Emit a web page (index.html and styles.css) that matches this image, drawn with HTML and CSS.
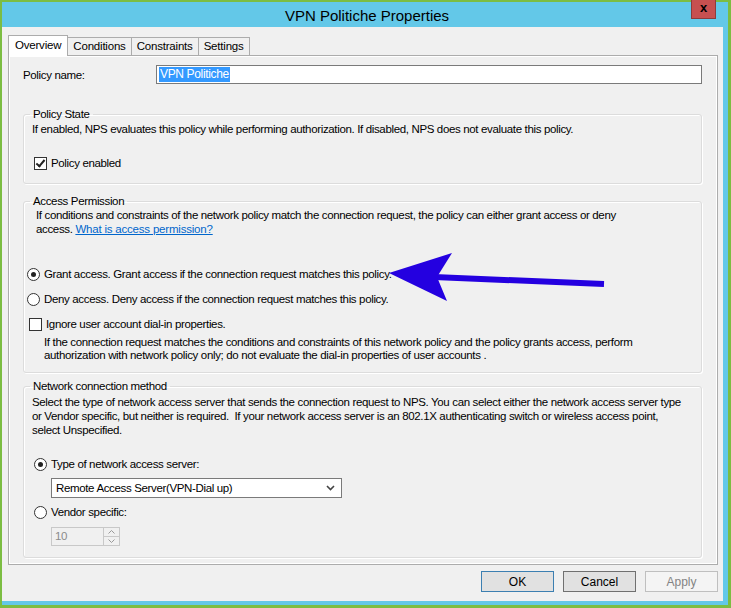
FILE: index.html
```html
<!DOCTYPE html>
<html lang="en">
<head>
    <meta charset="UTF-8">
    <title>VPN Politiche Properties</title>
    <link rel="stylesheet" href="styles.css">
</head>
<body>
    <div class="frame">
        <!-- Title bar -->
        <div class="titlebar">
            <span class="title">VPN Politiche Properties</span>
            <span class="close">x</span>
        </div>

        <div class="dialog">
            <!-- Tabs -->
            <div class="tabs">
                <span class="tab active">Overview</span>
                <span class="tab">Conditions</span>
                <span class="tab">Constraints</span>
                <span class="tab">Settings</span>
            </div>

            <div class="panel">
                <div class="name-row">
                    <span class="name-label">Policy name:</span>
                    <div class="textbox"><span class="selected">VPN Politiche</span></div>
                </div>

                <fieldset class="group state">
                    <legend>Policy State</legend>
                    <p class="line">If enabled, NPS evaluates this policy while performing authorization. If disabled, NPS does not evaluate this policy.</p>
                    <div class="option enabled-row"><span class="check on"></span>Policy enabled</div>
                </fieldset>

                <fieldset class="group permission">
                    <legend>Access Permission</legend>
                    <div class="lines indent">
                        <div>If conditions and constraints of the network policy match the connection request, the policy can either grant access or deny</div>
                        <div>access. <a href="#">What is access permission?</a></div>
                    </div>
                    <div class="option grant"><span class="radio on"></span>Grant access. Grant access if the connection request matches this policy.</div>
                    <div class="option deny"><span class="radio"></span>Deny access. Deny access if the connection request matches this policy.</div>
                    <div class="option ignore"><span class="check"></span>Ignore user account dial-in properties.</div>
                    <p class="lines small">If the connection request matches the conditions and constraints of this network policy and the policy grants access, perform authorization with network policy only; do not evaluate the dial-in properties of user accounts .</p>
                </fieldset>

                <fieldset class="group method">
                    <legend>Network connection method</legend>
                    <p class="lines">Select the type of network access server that sends the connection request to NPS. You can select either the network access server type or Vendor specific, but neither is required.&nbsp; If your network access server is an 802.1X authenticating switch or wireless access point, select Unspecified.</p>
                    <div class="option type-row"><span class="radio on"></span>Type of network access server:</div>
                    <div class="combo">
                        <span>Remote Access Server(VPN-Dial up)</span>
                        <svg width="9" height="6" viewBox="0 0 9 6"><path d="M1 1 L4.5 4.5 L8 1" fill="none" stroke="#444" stroke-width="1.6"/></svg>
                    </div>
                    <div class="option vendor-row"><span class="radio"></span>Vendor specific:</div>
                    <div class="spin">
                        <span class="spin-value">10</span>
                        <span class="spin-btns">
                            <span class="spin-btn"><svg width="7" height="4" viewBox="0 0 7 4"><path d="M0.5 3.5 L3.5 0.5 L6.5 3.5" fill="none" stroke="#999" stroke-width="1"/></svg></span>
                            <span class="spin-btn"><svg width="7" height="4" viewBox="0 0 7 4"><path d="M0.5 0.5 L3.5 3.5 L6.5 0.5" fill="none" stroke="#999" stroke-width="1"/></svg></span>
                        </span>
                    </div>
                </fieldset>
            </div>

            <!-- Dialog buttons -->
            <div class="buttons">
                <button class="btn default">OK</button>
                <button class="btn">Cancel</button>
                <button class="btn disabled">Apply</button>
            </div>
        </div>

        <!-- Annotation arrow -->
        <svg class="arrow" width="731" height="608" viewBox="0 0 731 608">
            <line x1="434" y1="277" x2="604" y2="284" stroke="#2400e0" stroke-width="6"/>
            <polygon points="389,273 452,253 437,277 447,301" fill="#2400e0"/>
        </svg>
    </div>
</body>
</html>
```

FILE: styles.css
```css
body {
    margin: 0;
    font-family: "Liberation Sans", Arial, sans-serif;
    font-size: 11.5px;
    color: #000;
}

.frame {
    position: relative;
    width: 731px;
    height: 608px;
    box-sizing: border-box;
    border: 2px solid #7cbd42;
    border-right-width: 3px;
    border-bottom-width: 3px;
    background: #63c8e8;
    display: flex;
    flex-direction: column;
}

.titlebar {
    height: 25px;
    display: flex;
    justify-content: center;
    align-items: center;
    position: relative;
}

.title {
    font-size: 15px;
    margin-left: 4px;
    margin-top: 1px;
}

.close {
    position: absolute;
    right: 12px;
    top: -2px;
    width: 23px;
    height: 18px;
    background: #c75050;
    border: 1px solid #8e3b3b;
    border-top: none;
    color: #000;
    font-weight: bold;
    font-size: 13px;
    line-height: 15px;
    text-align: center;
}

.dialog {
    flex: 1;
    margin-right: 5px;
    margin-bottom: 4px;
    background: #f0f0f0;
    padding: 8px 5px 0 6px;
    display: flex;
    flex-direction: column;
}

.tabs {
    display: flex;
    align-items: flex-end;
    height: 20px;
    position: relative;
    z-index: 1;
}

.tab {
    height: 17px;
    line-height: 17px;
    padding: 0 5px;
    border: 1px solid #acacac;
    border-bottom: none;
    border-left: none;
    background: #f0f0f0;
    letter-spacing: -0.2px;
}

.tab.active {
    height: 20px;
    line-height: 19px;
    padding: 0 6px;
    background: #fff;
    border-left: 1px solid #acacac;
    margin-bottom: -1px;
}

.panel {
    box-sizing: border-box;
    height: 510px;
    border: 1px solid #acacac;
    box-shadow: inset 0 0 0 1px #fff;
    background: #f0f0f0;
    padding: 9px 15px 0 14px;
    letter-spacing: -0.35px;
}

.name-row {
    display: flex;
    align-items: center;
    height: 19px;
}

.name-label {
    width: 133px;
}

.textbox {
    flex: 1;
    height: 17px;
    border: 1px solid #7a7a7a;
    background: #fff;
    display: flex;
    align-items: center;
    padding-left: 2px;
    font-size: 12px;
}

.selected {
    background: #3399ff;
    color: #fff;
    line-height: 15px;
    padding: 0 1px;
}

.group {
    margin: 0;
    border: 1px solid #dcdcdc;
    border-radius: 3px;
    box-shadow: inset 1px 1px 0 #fff, 1px 1px 0 #fff;
    padding: 0 8px;
    min-width: 0;
}

.group legend {
    padding: 0 3px;
    margin-left: -2px;
    line-height: 14px;
}

.state {
    margin-top: 23px;
    padding-bottom: 13px;
}

.permission {
    margin-top: 10px;
    padding-bottom: 10px;
}

.method {
    margin-top: 6px;
    padding-bottom: 11px;
}

.line,
.lines {
    margin: 0;
    line-height: 14px;
}

.state .line {
    margin-top: 1px;
}

.indent {
    padding-left: 4px;
}

.lines a {
    color: #0066cc;
    letter-spacing: -0.2px;
}

.small {
    padding-left: 12px;
    padding-right: 50px;
    margin-top: 5px;
    line-height: 13px;
}

.method .lines {
    margin-top: 2px;
    padding-right: 7px;
}

.option {
    display: flex;
    align-items: center;
    height: 14px;
}

.check,
.radio {
    width: 11px;
    height: 11px;
    border: 1px solid #333;
    background: #fff;
    margin-right: 4px;
    flex-shrink: 0;
    position: relative;
}

.radio {
    border-radius: 50%;
}

.radio.on::after {
    content: "";
    position: absolute;
    left: 3px;
    top: 3px;
    width: 5px;
    height: 5px;
    border-radius: 50%;
    background: #222;
}

.check.on::after {
    content: "";
    position: absolute;
    left: 3px;
    top: 0;
    width: 3px;
    height: 7px;
    border: solid #222;
    border-width: 0 2px 2px 0;
    transform: rotate(40deg);
}

.enabled-row {
    margin-top: 20px;
    padding-left: 2px;
}

.grant {
    margin-top: 31px;
    margin-left: -5px;
}

.deny {
    margin-top: 11px;
    margin-left: -5px;
}

.ignore {
    margin-top: 11px;
    margin-left: -3px;
}

.type-row {
    margin-top: 20px;
    padding-left: 2px;
}

.combo {
    margin: 7px 0 0 19px;
    height: 18px;
    border: 1px solid #7a7a7a;
    background: #fff;
    display: flex;
    align-items: center;
    justify-content: space-between;
    padding: 0 6px 0 4px;
    width: 279px;
}

.vendor-row {
    margin-top: 7px;
    padding-left: 2px;
}

.spin {
    margin: 8px 0 0 19px;
    width: 67px;
    height: 17px;
    border: 1px solid #c8c8c8;
    background: #f0f0f0;
    display: flex;
    justify-content: space-between;
}

.spin-value {
    color: #8a8a8a;
    padding-left: 3px;
    line-height: 17px;
}

.spin-btns {
    width: 15px;
    display: flex;
    flex-direction: column;
    border-left: 1px solid #c8c8c8;
}

.spin-btn {
    flex: 1;
    display: flex;
    align-items: center;
    justify-content: center;
}

.spin-btn + .spin-btn {
    border-top: 1px solid #c8c8c8;
}

.buttons {
    display: flex;
    justify-content: flex-end;
    gap: 9px;
    margin-top: 6px;
}

.btn {
    width: 73px;
    height: 21px;
    font-family: "Liberation Sans", Arial, sans-serif;
    font-size: 12px;
    background: #e1e1e1;
    border: 1px solid #707070;
    padding: 0;
    color: #000;
}

.btn.default {
    border-color: #3c7fb1;
}

.btn.disabled {
    background: #f4f4f4;
    border-color: #bfbfbf;
    color: #838383;
}

.arrow {
    position: absolute;
    left: -2px;
    top: -2px;
    pointer-events: none;
}
```
